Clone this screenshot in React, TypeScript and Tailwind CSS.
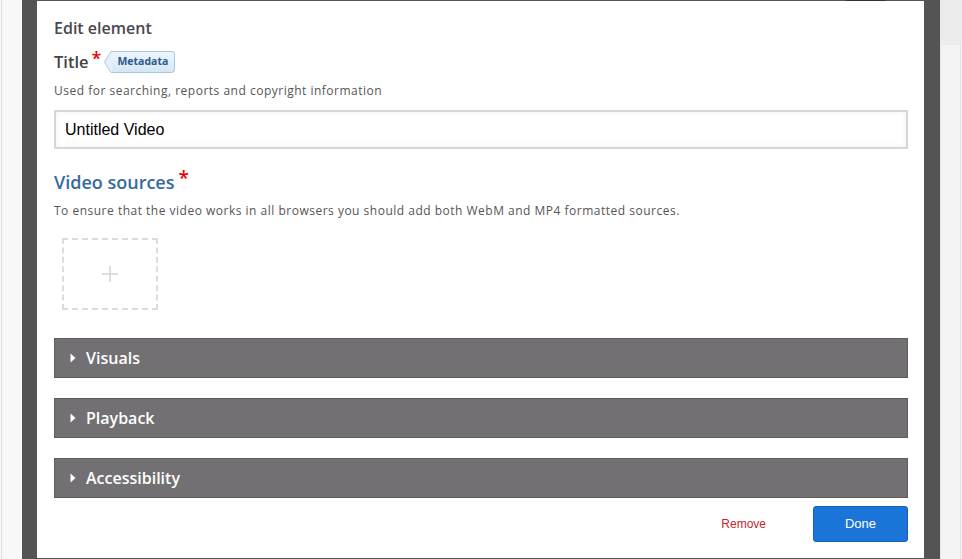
import React from 'react';

const Caret = () => (
  <svg width="6" height="10" viewBox="0 0 6 10" className="shrink-0">
    <path d="M0.5 0.5 L5.5 5 L0.5 9.5 Z" fill="#ffffff" />
  </svg>
);

const Section: React.FC<{ label: string }> = ({ label }) => (
  <div className="h-[40px] bg-[#727072] border border-[#5e5c5e] flex items-center pl-[15px] gap-[10px] text-white text-[16px] font-semibold">
    <Caret />
    <span>{label}</span>
  </div>
);

const App: React.FC = () => {
  return (
    <div className="w-[962px] h-[559px] flex bg-[#f8f8f8] overflow-hidden" style={{ fontFamily: '"Open Sans", sans-serif' }}>
      {/* left page edge */}
      <div className="w-[22px] shrink-0 flex">
        <div className="w-[1px] ml-[1px] bg-[#dedede]"></div>
      </div>

      {/* dark frame */}
      <div className="w-[918px] shrink-0 bg-[#545454] pl-[15px] pr-[16px] pt-[1px] relative">
        <div className="absolute top-0 left-[824px] w-[40px] h-[1px] bg-[#333]"></div>

        <div className="h-[557px] bg-white pt-[17px] pl-[17px] pr-[16px]">
          <div className="text-[16px] leading-[20px] font-semibold text-[#4a4650]">Edit element</div>

          <div className="mt-[12px] h-[24px] flex items-center">
            <span className="text-[16.5px] font-semibold text-[#444]">Title</span>
            <span className="text-[18px] text-[#e00] ml-[3px] -mt-[8px] font-semibold">*</span>
            <span className="relative ml-[10px] h-[22px] pl-[6px] pr-[6px] flex items-center text-[10.5px] font-bold text-[#2d5a8b] bg-gradient-to-b from-[#eef6fc] to-[#d5e7f5] border border-[#a9c7e0] border-l-0 rounded-r-[4px]">
              <svg className="absolute -left-[7px] top-[-1px]" width="8" height="22" viewBox="0 0 8 22">
                <path d="M8 0.5 L7 0.5 L0.5 11 L7 21.5 L8 21.5" fill="#e4f0f9" stroke="#a9c7e0" strokeWidth="1" />
              </svg>
              Metadata
            </span>
          </div>

          <div className="mt-[9px] text-[12px] leading-[16px] tracking-[0.5px] text-[#555]">Used for searching, reports and copyright information</div>

          <div className="mt-[11px] h-[39px] border-2 border-[#d6d6d6] shadow-[inset_0_0_6px_rgba(0,0,0,0.06)] flex items-center pl-[9px] text-[16px] text-black" style={{ fontFamily: '"Liberation Sans", Arial, sans-serif' }}>
            Untitled Video
          </div>

          <div className="mt-[21px] h-[24px] flex items-center">
            <span className="text-[18px] font-semibold text-[#356a9f]">Video sources</span>
            <span className="text-[19px] text-[#e00] ml-[4px] -mt-[8px] font-semibold">*</span>
          </div>

          <div className="mt-[9px] text-[12px] leading-[16px] tracking-[0.5px] text-[#555]">To ensure that the video works in all browsers you should add both WebM and MP4 formatted sources.</div>

          <div className="mt-[19px] ml-[8px] w-[96px] h-[72px] border-2 border-dashed border-[#dcdcdc] flex items-center justify-center">
            <svg width="16" height="16" viewBox="0 0 16 16">
              <path d="M8 0 V16 M0 8 H16" stroke="#d4d4d4" strokeWidth="1.5" />
            </svg>
          </div>

          <div className="mt-[28px] flex flex-col gap-[20px]">
            <Section label="Visuals" />
            <Section label="Playback" />
            <Section label="Accessibility" />
          </div>

          <div className="mt-[8px] flex justify-end items-center" style={{ fontFamily: '"Liberation Sans", Arial, sans-serif' }}>
            <span className="text-[12px] text-[#c4282b] mr-[47px]">Remove</span>
            <button className="w-[95px] h-[36px] bg-[#1b74d8] border border-[#1461b8] rounded-[3px] text-white text-[13px]">Done</button>
          </div>
        </div>
      </div>

      {/* right page edge */}
      <div className="flex-1 border-l border-[#e6e6e6] bg-[#f4f4f4] relative">
        <div className="absolute right-[1px] top-0 bottom-0 w-[1px] bg-[#e0e0e0]"></div>
        <div className="absolute left-0 right-0 top-0 h-[45px] bg-[#ececec]"></div>
      </div>
    </div>
  );
};

export default App;
